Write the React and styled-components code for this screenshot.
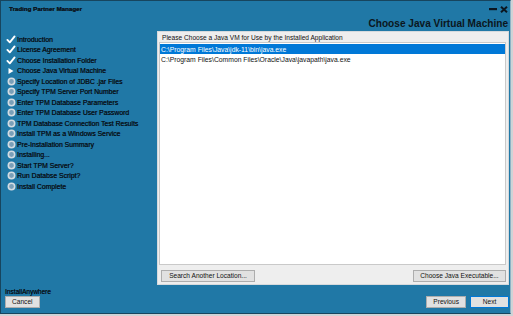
import React from "react";
import styled, { createGlobalStyle } from "styled-components";

const Global = createGlobalStyle`
  html, body { margin: 0; padding: 0; background: #cfd3d6; }
  body { font-family: "Liberation Sans", Arial, sans-serif; }
  #root { width: 513px; height: 316px; }
`;

const Window = styled.div`
  width: 509px;
  height: 312px;
  background: #2078a6;
  border: 1px solid #17455e;
  border-right-color: #8fb3c6;
  display: flex;
  flex-direction: column;
`;

const TitleBar = styled.div`
  display: flex;
  flex-direction: column;
  height: 30px;
  padding: 0 2px 0 8px;
`;

const TopRow = styled.div`
  display: flex;
  justify-content: space-between;
  align-items: center;
  height: 13px;
`;

const Title = styled.div`
  font-size: 6.2px;
  font-weight: bold;
  color: #0b1620;
  padding-top: 1px;
  text-shadow: 0.2px 0 0 #0b1620;
`;

const Controls = styled.div`
  display: flex;
  align-items: center;
  gap: 2px;
  padding-top: 3px;
`;

const Heading = styled.div`
  flex: 1;
  display: flex;
  align-items: center;
  justify-content: flex-end;
  font-size: 10.1px;
  font-weight: bold;
  color: #0b1620;
  padding-top: 1px;
`;

const Body = styled.div`
  display: flex;
  height: 254px;
`;

const Sidebar = styled.ul`
  list-style: none;
  margin: 0;
  padding: 3px 0 0 4px;
  width: 152px;
`;

const Step = styled.li`
  display: flex;
  align-items: center;
  height: 10.5px;
  font-size: 6.85px;
  color: #08121a;
  white-space: nowrap;
  text-shadow: 0.3px 0 0 #08121a;
`;

const IconBox = styled.span`
  width: 12px;
  display: flex;
  justify-content: center;
  align-items: center;
`;

const Panel = styled.div`
  flex: 1;
  margin-right: 1px;
  background: #eeeeee;
  border: 1px solid #d6dadd;
  display: flex;
  flex-direction: column;
  padding: 0 2px 2px 1px;
`;

const Label = styled.div`
  height: 9px;
  font-size: 6.6px;
  color: #111;
  display: flex;
  align-items: center;
  padding: 1px 0 0 3px;
`;

const List = styled.div`
  flex: 1;
  background: #ffffff;
  border: 1px solid #c9c9c9;
  padding: 1px 0 0 0;
`;

const Row = styled.div`
  height: 10px;
  display: flex;
  align-items: center;
  padding-left: 1px;
  font-size: 6.8px;
  color: ${(p) => (p.$selected ? "#ffffff" : "#111")};
  background: ${(p) => (p.$selected ? "#0078d7" : "transparent")};
`;

const PanelButtons = styled.div`
  display: flex;
  justify-content: space-between;
  padding: 5px 0 0 2px;
`;

const Button = styled.button`
  height: 12px;
  padding: 0 6px;
  min-width: ${(p) => p.$min || 0}px;
  font-family: "Liberation Sans", Arial, sans-serif;
  font-size: 6.6px;
  color: #111;
  background: #e1e1e1;
  border: 1px solid ${(p) => (p.$focus ? "#0078d7" : "#adadad")};
  display: flex;
  align-items: center;
  justify-content: center;
  line-height: 1;
`;

const Footer = styled.div`
  flex: 1;
  display: flex;
  flex-direction: column;
  padding: 2px 1px 0 4px;
`;

const Brand = styled.div`
  font-size: 6.5px;
  color: #08121a;
  height: 9px;
  display: flex;
  align-items: center;
  text-shadow: 0.2px 0 0 #08121a;
`;

const FooterRow = styled.div`
  display: flex;
  align-items: center;
  justify-content: space-between;
`;

const NavGroup = styled.div`
  display: flex;
  gap: 4px;
`;

const Check = () => (
  <svg width="10" height="9" viewBox="0 0 10 9">
    <path d="M1.4 4.9 L3.8 7.3 L8.6 1.4" fill="none" stroke="#fff" strokeWidth="1.9" strokeLinecap="round" strokeLinejoin="round" />
  </svg>
);

const Arrow = () => (
  <svg width="8" height="8" viewBox="0 0 8 8">
    <path d="M1.5 1 L6.5 4 L1.5 7 Z" fill="#fff" />
  </svg>
);

const Dot = () => (
  <svg width="9" height="9" viewBox="0 0 9 9">
    <circle cx="4.5" cy="4.5" r="3.2" fill="#7a9fb8" stroke="#d3dce2" strokeWidth="1.6" />
  </svg>
);

const steps = [
  ["Introduction", "done"],
  ["License Agreement", "done"],
  ["Choose Installation Folder", "done"],
  ["Choose Java Virtual Machine", "current"],
  ["Specify Location of JDBC .jar Files", "todo"],
  ["Specify TPM Server Port Number", "todo"],
  ["Enter TPM Database Parameters", "todo"],
  ["Enter TPM Database User Password", "todo"],
  ["TPM  Database Connection Test Results", "todo"],
  ["Install TPM as a Windows Service", "todo"],
  ["Pre-Installation Summary", "todo"],
  ["Installing...", "todo"],
  ["Start TPM Server?", "todo"],
  ["Run Databse Script?", "todo"],
  ["Install Complete", "todo"],
];

export default function App() {
  return (
    <>
      <Global />
      <Window>
        <TitleBar>
          <TopRow>
            <Title>Trading Partner Manager</Title>
            <Controls>
              <svg width="9" height="6" viewBox="0 0 9 6">
                <rect x="0" y="2" width="8" height="2.2" fill="#0b1620" />
              </svg>
              <svg width="8" height="7" viewBox="0 0 8 7">
                <path d="M1 0.8 L7 6.2 M7 0.8 L1 6.2" stroke="#0b1620" strokeWidth="2" />
              </svg>
            </Controls>
          </TopRow>
          <Heading>Choose Java Virtual Machine</Heading>
        </TitleBar>
        <Body>
          <Sidebar>
            {steps.map(([name, state]) => (
              <Step key={name}>
                <IconBox>
                  {state === "done" ? <Check /> : state === "current" ? <Arrow /> : <Dot />}
                </IconBox>
                {name}
              </Step>
            ))}
          </Sidebar>
          <Panel>
            <Label>Please Choose a Java VM for Use by the Installed Application</Label>
            <List>
              <Row $selected>C:\Program Files\Java\jdk-11\bin\java.exe</Row>
              <Row>C:\Program Files\Common Files\Oracle\Java\javapath\java.exe</Row>
            </List>
            <PanelButtons>
              <Button $min={94}>Search Another Location...</Button>
              <Button $min={93}>Choose Java Executable...</Button>
            </PanelButtons>
          </Panel>
        </Body>
        <Footer>
          <Brand>InstallAnywhere</Brand>
          <FooterRow>
            <Button $min={34}>Cancel</Button>
            <NavGroup>
              <Button $min={39}>Previous</Button>
              <Button $min={39} $focus>Next</Button>
            </NavGroup>
          </FooterRow>
        </Footer>
      </Window>
    </>
  );
}
